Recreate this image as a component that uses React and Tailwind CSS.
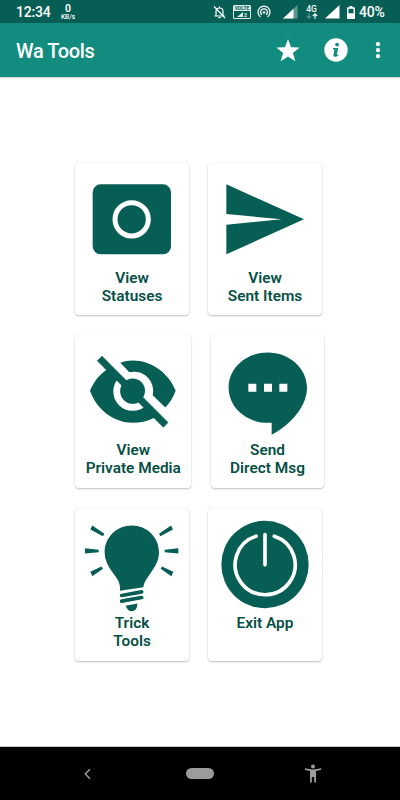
import React from 'react';

const StatusesIcon = () => (
    <svg viewBox="27 27 342 318" className="w-[114px] h-[106px] block">
        <rect x="80" y="91" width="235" height="210" rx="24" fill="#075e54" />
        <circle cx="197" cy="196" r="50" fill="none" stroke="#fff" strokeWidth="15" />
    </svg>
);

const SentIcon = () => (
    <svg viewBox="24 27 342 318" className="w-[114px] h-[106px] block">
        <path d="M79 91 L312 196 L79 301 V212 L245 196 L79 180 Z" fill="#075e54" />
    </svg>
);

const PrivateIcon = () => (
    <svg viewBox="27 22.5 349.5 318" className="w-[116.5px] h-[106px] block">
        <path d="M163 106 C175 101 188 99 200 99 C260 99 310 140 329 190 C322 209 312 226 298 240 L260 203 A58 58 0 0 0 190 134 Z" fill="#075e54" />
        <path d="M120 128 C98 143 82 165 72 190 C92 246 142 286 200 286 C222 286 244 281 262 272 L275 265 L130 120 Z" fill="#075e54" />
        <circle cx="200" cy="192" r="47.5" fill="none" stroke="#fff" strokeWidth="21" />
        <circle cx="200" cy="190" r="37" fill="#075e54" />
        <path d="M108 86 L306 285 L292 299 L94 100 Z" fill="#075e54" stroke="#075e54" strokeWidth="2" />
    </svg>
);

const MessageIcon = () => (
    <svg viewBox="33 22.5 342 318" className="w-[114px] h-[106px] block">
        <path d="M203 75 C268 75 321 122 321 181 C321 235 275 290 215 322 V286 H203 C138 286 86 239 86 181 C86 122 138 75 203 75 Z" fill="#075e54" />
        <path d="M145 169h24v24h-24Z M192 169h24v24h-24Z M238 169h24v24h-24Z" fill="#fff" />
    </svg>
);

const BulbIcon = () => (
    <svg viewBox="27 25.5 342 318" className="w-[114px] h-[106px] block" fill="#075e54">
        <path d="M197 78 C243 78 279 114 279 158 C279 182 269 198 255 219 C242 238 235 246 232 263 L162 274 V263 C160 244 153 238 140 219 C125 197 116 181 116 158 C116 114 152 78 197 78 Z" />
        <path d="M167 288 L227 277 M167 305 L227 294" stroke="#075e54" strokeWidth="11" strokeLinecap="round" />
        <path d="M179 319 L214 312 C214 327 208 335 196 335 C187 335 182 328 179 319 Z" />
        <path d="M79 78 L115 103 L111 110 L73 90 Z M315 78 L321 90 L283 110 L279 103 Z" />
        <path d="M57 146 L98 151 V158 L57 162 Z M337 146 V162 L296 158 V151 Z" />
        <path d="M106 201 L111 208 L79 230 L73 217 Z M288 201 L322 217 L316 230 L284 208 Z" />
    </svg>
);

const ExitIcon = () => (
    <svg viewBox="24 25.5 342 318" className="w-[114px] h-[106px] block">
        <circle cx="195" cy="195" r="131" fill="#075e54" />
        <path d="M168 110 A90 90 0 1 0 223 110 M195 105 V196" fill="none" stroke="#fff" strokeWidth="11" strokeLinecap="round" />
    </svg>
);

const rows = [
    [
        { icon: StatusesIcon, lines: ['View', 'Statuses'] },
        { icon: SentIcon, lines: ['View', 'Sent Items'] },
    ],
    [
        { icon: PrivateIcon, lines: ['View', 'Private Media'] },
        { icon: MessageIcon, lines: ['Send', 'Direct Msg'] },
    ],
    [
        { icon: BulbIcon, lines: ['Trick', 'Tools'] },
        { icon: ExitIcon, lines: ['Exit App'] },
    ],
];

const ToolCard = ({ icon: Icon, lines }) => (
    <button className="block h-[152.7px] bg-white rounded-[4px] shadow-[0_1px_2px_rgba(0,0,0,0.24),0_0_1px_rgba(0,0,0,0.12)]">
        <div className="h-full flex flex-col items-center -mr-[0.5px]">
            <Icon />
            {lines.map((line) => (
                <span key={line} className="text-[15.4px] leading-[18px] font-semibold text-[#075045] whitespace-nowrap">{line}</span>
            ))}
        </div>
    </button>
);

const StatusBar = () => (
    <div className="h-[23px] bg-[#075e54] flex items-center text-white pl-4 pr-[15px] pt-px">
        <span className="w-[36px] text-[14px] tracking-[-0.2px] font-medium leading-none">12:34</span>
        <div className="ml-2 w-4 flex flex-col items-center">
            <span className="text-[10.5px] leading-[11px] font-semibold">0</span>
            <span className="text-[6.5px] leading-[7px] font-medium">KB/s</span>
        </div>

        <svg viewBox="0 0 13 14" className="ml-auto w-[13px] h-[14px]" fill="none" stroke="#fff">
            <path d="M3 11 V6.5 C3 4.5 4.3 3 6.5 3 C8.7 3 10 4.5 10 6.5 V11 M1.5 11 H11.5 M6.5 1.5 V3" strokeWidth="1.2" />
            <path d="M5.3 12.6 H7.7" strokeWidth="1.2" />
            <path d="M1 1.5 L12 13" strokeWidth="1.2" />
        </svg>
        <div className="ml-[7px] w-[18px] h-[14px] border border-[#dcebe9] rounded-[1px] flex flex-col">
            <span className="h-[5px] bg-[#dcebe9] text-[#075e54] text-[5px] leading-[5px] font-bold text-center">VOLTE</span>
            <div className="flex items-center justify-center gap-px h-[7px]">
                <svg viewBox="0 0 6 5" className="w-1.5 h-[5px]"><path d="M0 5 L6 0 V5 Z" fill="#dcebe9" /></svg>
                <span className="text-[6px] leading-[6px] font-medium">2</span>
            </div>
        </div>
        <svg viewBox="0 0 14 14" className="ml-[6px] w-[14px] h-[14px]" fill="none" stroke="#fff" strokeWidth="1.3">
            <path d="M3.4 12 A6 6 0 1 1 10.6 12" />
            <path d="M4.8 9.8 A3.4 3.4 0 1 1 9.2 9.8" />
            <circle cx="7" cy="7.4" r="1.2" fill="#fff" stroke="none" />
        </svg>
        <svg viewBox="0 0 15 14" className="ml-[12px] w-[15px] h-[14px]">
            <path d="M0 13.5 L14.5 0 V13.5 Z" fill="#5a958e" />
            <path d="M0 13.5 L10.5 3.7 V13.5 Z" fill="#fff" />
        </svg>
        <div className="ml-[7px] w-[13px] h-[15px] flex flex-col items-center">
            <span className="text-[8.5px] leading-[8px] font-medium">4G</span>
            <svg viewBox="0 0 12 6" className="w-3 h-1.5" fill="none" strokeWidth="1.2">
                <path d="M3 0.5 V5 M1 3.2 L3 5.2 L5 3.2" stroke="#5a958e" />
                <path d="M9 5.8 V1 M6.8 3 L9 0.9 L11.2 3" stroke="#fff" />
            </svg>
        </div>
        <svg viewBox="0 0 15 14" className="ml-[7px] w-[15px] h-[14px]">
            <path d="M0 13.5 L14.5 0 V13.5 Z" fill="#fff" />
        </svg>
        <svg viewBox="0 0 8 13" className="ml-[7px] w-2 h-[13px]">
            <path d="M2.5 0 H5.5 V1.3 H7 Q8 1.3 8 2.3 V12 Q8 13 7 13 H1 Q0 13 0 12 V2.3 Q0 1.3 1 1.3 H2.5 Z" fill="#fff" />
            <path d="M1.5 2.8 H6.5 V7.3 H1.5 Z" fill="#075e54" />
        </svg>
        <span className="ml-1 w-[26px] text-[14px] tracking-[-0.2px] font-medium leading-none">40%</span>
    </div>
);

const AppBar = () => (
    <header className="h-[54px] bg-[#128c7e] flex items-center text-white pl-4 pr-[19px] shadow-[0_1px_1px_rgba(0,0,0,0.15)]">
        <h1 className="text-[20px] leading-none font-medium tracking-[-0.4px] pt-[2px]">Wa Tools</h1>
        <svg viewBox="0 0 24 23" className="ml-auto w-6 h-[23px]" fill="#fff">
            <path d="M12 0 L15 8.2 L23.7 8.5 L16.9 13.9 L19.3 22.3 L12 17.4 L4.7 22.3 L7.1 13.9 L0.3 8.5 L9 8.2 Z" />
        </svg>
        <svg viewBox="0 0 24 24" className="ml-6 w-6 h-6">
            <circle cx="12" cy="12" r="11.7" fill="#fff" />
            <circle cx="13.1" cy="6.6" r="1.9" fill="#128c7e" />
            <path d="M9 10 H14.3 L12.8 16.6 Q12.7 17.4 14.6 16.6 L14.3 17.8 Q12.6 18.9 10.9 18.8 Q9 18.7 9.4 16.8 L10.5 11.8 Q10.6 11.2 8.8 11.2 Z" fill="#128c7e" />
        </svg>
        <svg viewBox="0 0 6 18" className="ml-[27px] w-1.5 h-[18px]" fill="#fff">
            <circle cx="3" cy="3.2" r="2.1" />
            <circle cx="3" cy="9.2" r="2.1" />
            <circle cx="3" cy="15.2" r="2.1" />
        </svg>
    </header>
);

const NavBar = () => (
    <nav className="h-[54px] border-t border-[#c8c8c8] bg-black flex items-center pl-[83px] pr-[78px] justify-between">
        <svg viewBox="0 0 8 12" className="w-2 h-3" fill="none" stroke="#9b9b9b" strokeWidth="1.5">
            <path d="M7 1.3 L2.3 6 L7 10.7" />
        </svg>
        <div className="w-7 h-[11px] rounded-full bg-[#9b9b9b] ml-[5px]"></div>
        <svg viewBox="0 0 18 19" className="w-[18px] h-[19px]" fill="#9b9b9b">
            <circle cx="9" cy="2.4" r="2" />
            <path d="M1 4.3 Q9 6.5 17 4.3 L17.3 5.8 Q14.5 6.7 12 6.9 V18.6 H10.2 V12.9 H7.8 V18.6 H6 V6.9 Q3.5 6.7 0.7 5.8 Z" />
        </svg>
    </nav>
);

const App = () => {
    return (
        <div className="w-[400px] h-[800px] bg-white flex flex-col overflow-hidden font-['Roboto',sans-serif]">
            <StatusBar />
            <AppBar />
            <main className="flex-1 pt-[85.8px] pl-[75px] flex flex-col gap-5">
                {rows.map((row, i) => (
                    <div key={i} className="flex gap-[19.5px]">
                        {row.map((tool) => (
                            <ToolCard key={tool.lines.join(' ')} {...tool} />
                        ))}
                    </div>
                ))}
            </main>
            <NavBar />
        </div>
    );
};

export default App;
